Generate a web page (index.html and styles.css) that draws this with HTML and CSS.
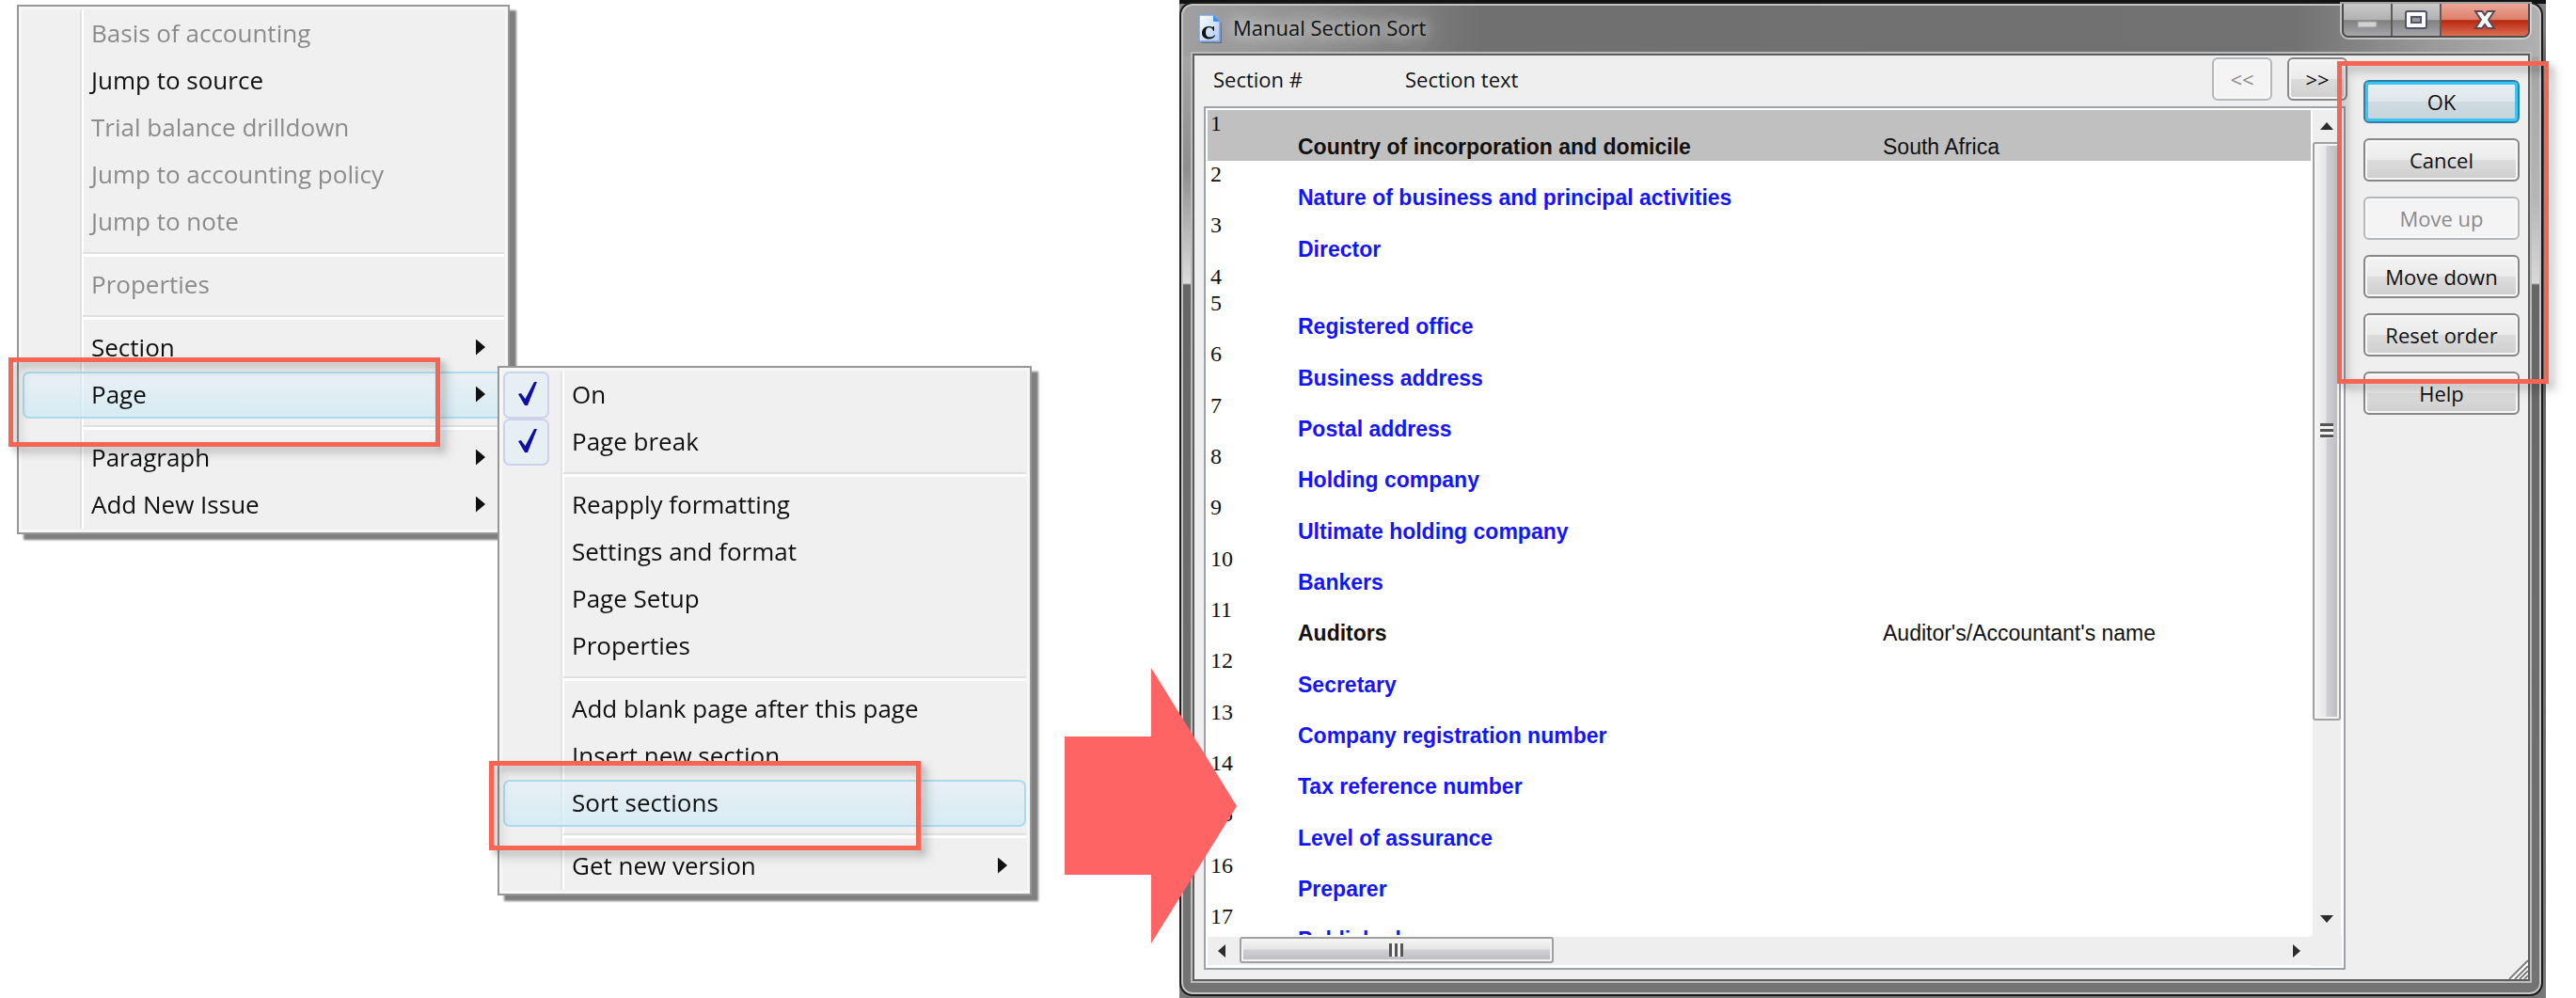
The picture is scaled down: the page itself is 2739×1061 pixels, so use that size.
FILE: index.html
```html
<!DOCTYPE html>
<html lang="en">
<head>
<meta charset="utf-8">
<title>Manual Section Sort</title>
<link rel="stylesheet" href="styles.css">
</head>
<body>
<main class="desktop">

  <nav class="menu menu-main" aria-label="Context menu">
    <button class="item" disabled>Basis of accounting</button>
    <button class="item">Jump to source</button>
    <button class="item" disabled>Trial balance drilldown</button>
    <button class="item" disabled>Jump to accounting policy</button>
    <button class="item" disabled>Jump to note</button>
    <hr class="separator">
    <button class="item" disabled>Properties</button>
    <hr class="separator">
    <button class="item has-sub">Section</button>
    <button class="item has-sub selected">Page</button>
    <hr class="separator">
    <button class="item has-sub">Paragraph</button>
    <button class="item has-sub">Add New Issue</button>
  </nav>

  <nav class="menu menu-page" aria-label="Page">
    <label class="item checkable"><input class="check" type="checkbox" checked><svg class="tick" viewBox="0 0 22 28" aria-hidden="true"><path d="M1 14L4 13L8.500 19L18 1H21L11 26H8Z"/></svg><span class="check-label">On</span></label>
    <label class="item checkable"><input class="check" type="checkbox" checked><svg class="tick" viewBox="0 0 22 28" aria-hidden="true"><path d="M1 14L4 13L8.500 19L18 1H21L11 26H8Z"/></svg><span class="check-label">Page break</span></label>
    <hr class="separator">
    <button class="item">Reapply formatting</button>
    <button class="item">Settings and format</button>
    <button class="item">Page Setup</button>
    <button class="item">Properties</button>
    <hr class="separator">
    <button class="item">Add blank page after this page</button>
    <button class="item">Insert new section</button>
    <button class="item selected">Sort sections</button>
    <hr class="separator">
    <button class="item has-sub">Get new version</button>
  </nav>

  <div class="backdrop">
    <section class="window" aria-label="Manual Section Sort">
      <header class="titlebar">
        <svg class="app-icon" viewBox="0 0 26 32" aria-hidden="true">
          <defs><linearGradient id="page" x1="0" y1="0" x2="1" y2="1"><stop offset="0" stop-color="#fff"/><stop offset="1" stop-color="#a9c8f4"/></linearGradient></defs>
          <path d="M3 3H18L25 10V31H3Z" fill="#44506a" opacity=".6"/>
          <path d="M1 1H16L23 8V29H1Z" fill="url(#page)" stroke="#7fa3dc" stroke-width="1.5"/>
          <path d="M16 1L23 8H16Z" fill="#3f8fe8"/>
          <path d="M17 13V18H16C15.500 15.500 14 14.300 12 14.300C9.300 14.300 8 16 8 19.500C8 23 9.500 24.500 12.500 24.500C14.500 24.500 16 23.800 17.500 22L18 23C16.500 25.500 14.300 26.500 11.500 26.500C7 26.500 4 24 4 20C4 16 7 13 11.300 13C13 13 14.500 13.500 15.300 14L16.200 13Z" fill="#111"/>
        </svg>
        <h1 class="title">Manual Section Sort</h1>
        <div class="controls">
          <button class="control" aria-label="Minimize"><svg viewBox="0 0 24 22"><rect x="2" y="13" width="20" height="6" fill="#d2d2d2" stroke="#999"/></svg></button>
          <button class="control" aria-label="Maximize"><svg viewBox="0 0 24 22"><rect x="1" y="2" width="22" height="18" rx="2" fill="#fff" stroke="#50546a" stroke-width="2"/><rect x="7" y="8" width="10" height="6" fill="#9a9a9a" stroke="#50546a" stroke-width="2"/></svg></button>
          <button class="control close" aria-label="Close"><svg viewBox="0 0 24 22"><path d="M2 2H9L12 6L15 2H22L16 11L22 20H15L12 16L9 20H2L8 11Z" fill="#fff" stroke="#5b4a54" stroke-width="2"/></svg></button>
        </div>
      </header>

      <div class="client">
        <div class="head">
          <span class="head-number">Section #</span>
          <span class="head-text">Section text</span>
          <button class="push step" disabled>&lt;&lt;</button>
          <button class="push step">&gt;&gt;</button>
        </div>

        <div class="listbox">
          <div class="list">
            <table class="sections">
              <tbody>
                <tr class="current"><td class="number">1</td><th scope="row">Country of incorporation and domicile</th><td>South Africa</td></tr>
                <tr><td class="number">2</td><th scope="row">Nature of business and principal activities</th><td></td></tr>
                <tr><td class="number">3</td><th scope="row">Director</th><td></td></tr>
                <tr class="empty"><td class="number">4</td><th scope="row"></th><td></td></tr>
                <tr><td class="number">5</td><th scope="row">Registered office</th><td></td></tr>
                <tr><td class="number">6</td><th scope="row">Business address</th><td></td></tr>
                <tr><td class="number">7</td><th scope="row">Postal address</th><td></td></tr>
                <tr><td class="number">8</td><th scope="row">Holding company</th><td></td></tr>
                <tr><td class="number">9</td><th scope="row">Ultimate holding company</th><td></td></tr>
                <tr><td class="number">10</td><th scope="row">Bankers</th><td></td></tr>
                <tr class="filled"><td class="number">11</td><th scope="row">Auditors</th><td>Auditor's/Accountant's name</td></tr>
                <tr><td class="number">12</td><th scope="row">Secretary</th><td></td></tr>
                <tr><td class="number">13</td><th scope="row">Company registration number</th><td></td></tr>
                <tr><td class="number">14</td><th scope="row">Tax reference number</th><td></td></tr>
                <tr><td class="number">15</td><th scope="row">Level of assurance</th><td></td></tr>
                <tr><td class="number">16</td><th scope="row">Preparer</th><td></td></tr>
                <tr><td class="number">17</td><th scope="row">Published</th><td></td></tr>
              </tbody>
            </table>
          </div>
          <div class="bar vertical">
            <button class="arrow" aria-label="Scroll up"><svg viewBox="0 0 14 8"><path d="M7 0L14 8H0Z"/></svg></button>
            <div class="track"><div class="thumb"><span class="grip"></span></div></div>
            <button class="arrow" aria-label="Scroll down"><svg viewBox="0 0 14 8"><path d="M0 0H14L7 8Z"/></svg></button>
          </div>
          <div class="bar horizontal">
            <button class="arrow" aria-label="Scroll left"><svg viewBox="0 0 8 14"><path d="M8 0V14L0 7Z"/></svg></button>
            <div class="track"><div class="thumb"><span class="grip"></span></div></div>
            <button class="arrow" aria-label="Scroll right"><svg viewBox="0 0 8 14"><path d="M0 0L8 7L0 14Z"/></svg></button>
          </div>
          <div class="corner"></div>
        </div>

        <div class="actions">
          <button class="push default">OK</button>
          <button class="push">Cancel</button>
          <button class="push" disabled>Move up</button>
          <button class="push">Move down</button>
          <button class="push">Reset order</button>
          <button class="push">Help</button>
        </div>

        <svg class="resize" viewBox="0 0 22 22" aria-hidden="true"><path d="M0 22L22 0V22Z" fill="#fff"/><path d="M2 22L22 2M8 22L22 8M13 22L22 13M18 22L22 18" stroke="#7d7d7d" stroke-width="2"/></svg>
      </div>
    </section>
  </div>

  <svg class="pointer" viewBox="0 0 183 293" aria-hidden="true"><path d="M0 73H92V0L183 147L92 293V220H0Z"/></svg>
  <div class="callout callout-page"></div>
  <div class="callout callout-sort"></div>
  <div class="callout callout-actions"></div>
</main>
</body>
</html>
```
FILE: styles.css
```css
* { box-sizing: border-box; }

body {
  margin: 0;
  background: #fff;
  color: #101010;
  font-family: "Open Sans", "Noto Sans", sans-serif;
}

button {
  margin: 0;
  padding: 0;
  border: 0;
  background: none;
  color: inherit;
  font: inherit;
}

.desktop {
  position: relative;
  min-height: 100vh;
  overflow: hidden;
}

/* ---- context menus ---- */

.menu {
  position: absolute;
  padding: 4px;
  border: 2px solid #979797;
  background:
    linear-gradient(90deg, #e2e3e3 2px, #fff 2px) 65px 4px / 4px calc(100% - 8px) no-repeat,
    #f0f0f0;
  box-shadow: inset 0 0 0 3px #f7f7f7;
  font-size: 26px;
  filter: drop-shadow(7px 6px 1px rgba(0, 0, 0, .5));
}

.menu-main { left: 18px; top: 5px; width: 524px; }
.menu-page { left: 529px; top: 389px; width: 568px; }

.item {
  position: relative;
  display: flex;
  align-items: center;
  width: 100%;
  height: 50px;
  padding-left: 71px;
  padding-bottom: 2px;
  border: 2px solid transparent;
  border-radius: 7px;
  text-align: left;
  white-space: nowrap;
}

.item:disabled { color: #8b8b8b; }

.item.selected {
  border-color: #aadcee;
  background: linear-gradient(rgba(226, 240, 246, .5), rgba(206, 234, 246, .75));
}

.has-sub::after {
  content: "";
  width: 10px;
  height: 17px;
  margin-left: auto;
  margin-right: 18px;
  background: #101010;
  clip-path: polygon(0 0, 100% 50%, 0 100%);
}

.separator {
  height: 17px;
  margin: 0 0 0 64px;
  border: 0;
  background: linear-gradient(transparent 7px, #e0e0e0 7px, #e0e0e0 9px, #fff 9px, #fff 12px, transparent 12px);
}

.checkable { padding: 0; border: 0; }
.check-label { padding-bottom: 2px; }

.check {
  appearance: none;
  width: 49px;
  height: 50px;
  margin: 0 24px 0 0;
  border: 2px solid #ccd3ec;
  border-radius: 7px;
  background: #e6eff4;
}

.tick {
  position: absolute;
  left: 15px;
  top: 10px;
  width: 22px;
  height: 28px;
  fill: #0f0fa8;
}

/* ---- dialog window ---- */

.backdrop {
  position: absolute;
  left: 1254px;
  right: 32px;
  top: 0;
  bottom: 0;
  padding: 2px 3px 2px 0;
  background: linear-gradient(#111 0, #111 4px, #808080 4px, #808080 30px, #3c3c3c 120px, #6a6a6a 400px, #777);
}

.window {
  display: flex;
  flex-direction: column;
  height: 100%;
  padding: 0 12px 14px;
  border: 2px solid #1b1b1b;
  border-radius: 14px;
  background:
    linear-gradient(#a5a5a5 0, #8e8e8e 120px, #dcdcdc 241px, #666 243px, #747474 100%) 0 56px / 14px 100% no-repeat,
    linear-gradient(#a5a5a5 0, #b5b5b5 150px, #d8d8d8 241px, #666 243px, #747474 100%) 100% 56px / 14px 100% no-repeat,
    linear-gradient(#747474, #747474) 0 100% / 100% 14px no-repeat,
    linear-gradient(90deg, #a0a0a0 0, #8e8e8e 150px, #707070 320px, #727272 82%, #9a9a9a 92%, #b0b0b0 100%);
  box-shadow: inset 0 0 0 2px #c4c4c4;
}

.titlebar {
  display: flex;
  align-items: center;
  flex: none;
  height: 53px;
}

.app-icon {
  width: 26px;
  height: 32px;
  margin: 0 11px 0 6px;
}

.title {
  margin: 0;
  padding-bottom: 4px;
  color: #111;
  font-size: 22px;
  font-weight: 400;
  text-shadow: 0 0 12px #d8d8d8, 0 0 20px #d0d0d0, 0 0 26px #ccc;
}

.controls {
  display: flex;
  align-self: flex-start;
  height: 36px;
  margin-left: auto;
  border: 2px solid #4c4c4c;
  border-top: 0;
  border-radius: 0 0 7px 7px;
  box-shadow: 0 0 0 2px rgba(220, 220, 220, .7);
  overflow: hidden;
}

.control {
  display: grid;
  place-items: center;
  width: 52px;
  border-right: 2px solid #5c5c5c;
  background: linear-gradient(#c9c9c9, #b2b2b2 50%, #808080 52%, #a6a6ac);
}

.control svg { width: 24px; height: 22px; }

.control.close {
  width: 92px;
  border: 0;
  background: linear-gradient(#eda795, #dc7f6b 50%, #b5260d 52%, #de6f52);
}

.client {
  position: relative;
  display: grid;
  grid-template: 52px minmax(0, 1fr) / minmax(0, 1fr) 166px;
  column-gap: 17px;
  flex: 1;
  min-height: 0;
  padding: 2px 9px 10px 10px;
  border: 2px solid #5d5d5d;
  outline: 2px solid #bcbcbc;
  background: #efefef;
  font-size: 22px;
}

.head {
  display: flex;
  align-items: flex-start;
  gap: 16px;
  line-height: 46px;
}

.head-number { width: 188px; margin-left: 10px; }
.head-text { margin-right: auto; }

.push {
  height: 46px;
  border: 2px solid #878787;
  border-radius: 6px;
  background: linear-gradient(#f3f3f3, #ebebeb 50%, #dcdcdc 51%, #cecece);
  box-shadow: inset 0 0 0 2px #f8f8f8;
  line-height: 38px;
  text-align: center;
}

.push:disabled {
  border-color: #b4b8bb;
  background: #f4f4f4;
  color: #8b8b8b;
}

.push.default {
  border-color: #2f7fa8;
  background: linear-gradient(#e9eff2, #dee7eb 50%, #cfdbe1 51%, #c5d3da);
  box-shadow: inset 0 0 0 3px #3cc4f2;
}

.step { width: 64px; }

.actions {
  grid-area: 1 / 2 / 3 / 3;
  display: flex;
  flex-direction: column;
  gap: 16px;
  padding-top: 24px;
}

.listbox {
  display: grid;
  grid-template: minmax(0, 1fr) 33px / minmax(0, 1fr) 33px;
  margin-right: 2px;
  padding: 2px;
  border: 2px solid #9ca1ab;
  background: #fff;
}

.list { overflow: hidden; }

.sections {
  width: 100%;
  border-collapse: collapse;
  table-layout: fixed;
  font-family: "Liberation Sans", Arial, sans-serif;
  font-size: 23px;
  line-height: 26px;
}

.sections tr { height: 54px; }
.sections tr:nth-child(3n) { height: 55px; }
.sections .empty { height: 28px; }

.sections td,
.sections th {
  padding: 0 0 2px;
  text-align: left;
  vertical-align: bottom;
  white-space: nowrap;
}

.sections th { width: 622px; color: #1414ff; }

.sections .number {
  width: 96px;
  padding: 1px 0 0 3px;
  font-family: "Liberation Serif", "Times New Roman", serif;
  font-size: 24px;
  vertical-align: top;
}

.sections .current { background: #c0c0c0; }
.sections .current th,
.sections .filled th { color: #101010; }

/* ---- scroll bars ---- */

.bar { display: flex; background: #eee; }
.vertical { flex-direction: column; margin: 0 1px 0 2px; }
.horizontal { margin: 2px 0 1px; }
.corner { background: #eee; }
.track { flex: 1; min-width: 0; min-height: 0; }

.arrow {
  display: grid;
  place-items: center;
  flex: none;
  width: 30px;
  height: 34px;
}

.arrow svg { width: 14px; height: 8px; fill: #2c2c2c; }
.horizontal .arrow { height: 30px; }
.horizontal .arrow svg { width: 8px; height: 14px; }

.thumb {
  display: grid;
  place-items: center;
  border: 2px solid #a0a0a0;
  border-radius: 3px;
  box-shadow: inset 0 0 0 2px #f4f4f4;
}

.vertical .thumb {
  height: 76%;
  background: linear-gradient(90deg, #f5f5f5, #e6e6e8 45%, #d0d0d4 50%, #bcbcc0);
}

.horizontal .thumb {
  width: 30%;
  height: 28px;
  margin-left: 4px;
  background: linear-gradient(#f5f5f5, #e6e6e8 45%, #d0d0d4 50%, #bcbcc0);
}

.grip {
  width: 14px;
  height: 16px;
  background: repeating-linear-gradient(#555 0 3px, #f4f4f4 3px 6px);
}

.horizontal .grip {
  width: 15px;
  height: 14px;
  background: repeating-linear-gradient(90deg, #555 0 3px, #f4f4f4 3px 6px);
}

.resize {
  position: absolute;
  right: 0;
  bottom: 0;
  width: 22px;
  height: 22px;
}

/* ---- annotations ---- */

.pointer {
  position: absolute;
  left: 1132px;
  top: 710px;
  width: 183px;
  height: 293px;
  fill: #ff6464;
}

.callout {
  position: absolute;
  border: 5px solid #f76454;
  filter: drop-shadow(4px 4px 3px rgba(0, 0, 0, .14)) drop-shadow(7px 7px 5px rgba(0, 0, 0, .18));
  pointer-events: none;
}

.callout-page { left: 9px; top: 380px; width: 459px; height: 95px; }
.callout-sort { left: 520px; top: 809px; width: 459px; height: 95px; }
.callout-actions { right: 29px; top: 65px; width: 225px; height: 343px; }
```
